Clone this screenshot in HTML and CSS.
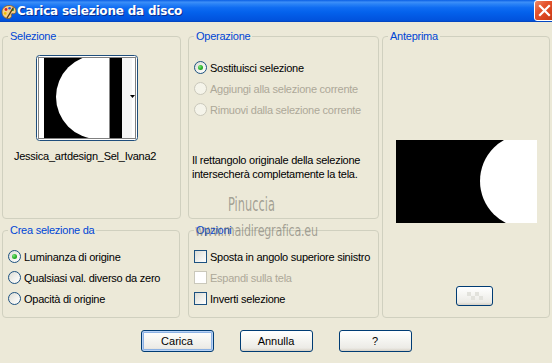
FILE: index.html
```html
<!DOCTYPE html>
<html lang="it">
<head>
<meta charset="utf-8">
<title>Carica selezione da disco</title>
<link rel="stylesheet" href="styles.css">
</head>
<body>
<div class="window">
  <div class="titlebar">
    <svg class="app-icon" width="16" height="16" viewBox="0 0 16 16">
      <path d="M8 1.5c4 0 7 2.4 7 5.6 0 2.2-1.6 3-3 2.6-1.2-.3-2 .3-1.6 1.6.4 1.4-.5 3.2-3 3.2C3.6 14.5 1 11.6 1 8 1 4.4 4 1.5 8 1.5z" fill="#F2D08A" stroke="#8A5A20" stroke-width="0.8"/>
      <circle cx="5" cy="5.5" r="1.4" fill="#E02020"/>
      <circle cx="8.6" cy="4.2" r="1.3" fill="#2050E0"/>
      <circle cx="11.8" cy="5.8" r="1.2" fill="#20A040"/>
      <circle cx="4.2" cy="9.4" r="1.3" fill="#F0C000"/>
      <path d="M6 14 L12.5 3.5" stroke="#5A3A10" stroke-width="1.4"/>
    </svg>
    <span class="title">Carica selezione da disco</span>
    <span class="close">
      <svg width="13" height="13" viewBox="0 0 13 13"><path d="M2 2 L11 11 M11 2 L2 11" stroke="#fff" stroke-width="2.2" stroke-linecap="square"/></svg>
    </span>
  </div>

  <div class="content">
    <fieldset class="group g-sel">
      <legend>Selezione</legend>
      <div class="sel-body">
        <svg class="thumb" width="102" height="86" viewBox="0 0 102 86">
          <defs><clipPath id="imgclip"><rect x="8" y="3" width="88" height="80"/></clipPath></defs>
          <rect x="0.5" y="0.5" width="101" height="85" rx="3" fill="#fff" stroke="#1F4E7C"/>
          <g clip-path="url(#imgclip)">
            <rect x="8" y="3" width="88" height="80" fill="#000"/>
            <circle cx="62" cy="42" r="42" fill="#fff"/>
            <rect x="62" y="3" width="11" height="80" fill="#fff"/>
            <rect x="73" y="3" width="1" height="80" fill="#888"/>
            <rect x="74" y="3" width="12" height="80" fill="#000"/>
            <rect x="86" y="3" width="10" height="80" fill="#F6F6F6"/>
          </g>
          <rect x="2.5" y="2.5" width="97" height="81" fill="none" stroke="#000" stroke-dasharray="1 1"/>
          <path d="M94 40 H99 L96.5 43 Z" fill="#000"/>
        </svg>
        <div class="sel-name">Jessica_artdesign_Sel_Ivana2</div>
      </div>
    </fieldset>

    <fieldset class="group g-op">
      <legend>Operazione</legend>
      <div class="op-body">
        <div class="row"><span class="radio checked"></span><span>Sostituisci selezione</span></div>
        <div class="row disabled"><span class="radio"></span><span>Aggiungi alla selezione corrente</span></div>
        <div class="row disabled"><span class="radio"></span><span>Rimuovi dalla selezione corrente</span></div>
        <p class="note">Il rettangolo originale della selezione intersecherà completamente la tela.</p>
      </div>
    </fieldset>

    <fieldset class="group g-prev">
      <legend>Anteprima</legend>
      <div class="prev-body">
        <svg class="preview" width="141" height="83" viewBox="0 0 141 83">
          <defs><clipPath id="pclip"><rect width="141" height="83"/></clipPath></defs>
          <g clip-path="url(#pclip)">
            <rect width="141" height="83" fill="#000"/>
            <circle cx="131" cy="41" r="47" fill="#fff"/>
            <rect x="131" y="0" width="10" height="83" fill="#fff"/>
          </g>
        </svg>
        <button class="btn small" type="button">
          <svg width="20" height="10" viewBox="0 0 20 10">
            <rect x="2" y="1" width="4" height="4" fill="#E2E2DC"/>
            <rect x="10" y="1" width="4" height="4" fill="#E2E2DC"/>
            <rect x="6" y="5" width="4" height="4" fill="#E2E2DC"/>
            <rect x="14" y="5" width="4" height="4" fill="#E2E2DC"/>
          </svg>
        </button>
      </div>
    </fieldset>

    <fieldset class="group g-crea">
      <legend>Crea selezione da</legend>
      <div class="opt-body">
        <div class="row"><span class="radio checked"></span><span>Luminanza di origine</span></div>
        <div class="row"><span class="radio"></span><span>Qualsiasi val. diverso da zero</span></div>
        <div class="row"><span class="radio"></span><span>Opacità di origine</span></div>
      </div>
    </fieldset>

    <fieldset class="group g-opz">
      <legend>Opzioni</legend>
      <div class="opt-body">
        <div class="row"><span class="check"></span><span>Sposta in angolo superiore sinistro</span></div>
        <div class="row disabled"><span class="check"></span><span>Espandi sulla tela</span></div>
        <div class="row"><span class="check"></span><span>Inverti selezione</span></div>
      </div>
    </fieldset>

    <div class="watermark wm1">Pinuccia</div>
    <div class="watermark wm2">www.maidiregrafica.eu</div>
  </div>

  <div class="buttons">
    <button class="btn default" type="button">Carica</button>
    <button class="btn" type="button">Annulla</button>
    <button class="btn" type="button">?</button>
  </div>
</div>
</body>
</html>
```

FILE: styles.css
```css
* { box-sizing: border-box; }
html, body { margin: 0; padding: 0; }
body {
  width: 552px;
  height: 363px;
  overflow: hidden;
  background: #ECE9D8;
  font-family: "Liberation Sans", Arial, sans-serif;
  font-size: 11px;
  letter-spacing: -0.25px;
  color: #000;
}
.window {
  width: 552px;
  height: 363px;
  overflow: hidden;
  background: #ECE9D8;
}
.titlebar {
  height: 22px;
  display: flex;
  align-items: center;
  background: linear-gradient(#0A5FE4 0%, #3D8FF8 10%, #2A83F6 18%, #0F6CF2 35%, #0462EC 55%, #0259E4 75%, #0153DD 92%, #0442B8 100%);
  color: #fff;
}
.app-icon { margin-left: 1px; margin-top: 1px; flex: none; }
.title {
  font-family: "DejaVu Sans", sans-serif;
  font-weight: bold;
  font-size: 12px;
  letter-spacing: -0.2px;
  text-shadow: 1px 1px 0 #0A2E90;
  flex: 1;
}
.close {
  width: 21px;
  height: 21px;
  margin-right: -3px;
  margin-top: -1px;
  border: 1px solid #fff;
  border-radius: 3px;
  background: linear-gradient(135deg, #F08A6A 0%, #E5552F 35%, #D8421C 70%, #C23A18 100%);
  display: flex;
  align-items: center;
  justify-content: center;
}

.content {
  position: relative;
  display: grid;
  grid-template-columns: 186px 194px 168px;
  grid-template-rows: 189px 94px;
  row-gap: 5px;
  padding: 8px 0 0 2px;
}
.group {
  margin: 0;
  padding: 0;
  min-width: 0;
  border: 1px solid #D0D0BF;
  border-radius: 4px;
}
.group legend {
  margin-left: 5px;
  padding: 0 2px;
  color: #0046D5;
  line-height: 12px;
  font-size: 11px;
}
.g-sel { grid-column: 1; grid-row: 1; width: 179px; }
.g-op { grid-column: 2; grid-row: 1; width: 191px; }
.g-prev { grid-column: 3; grid-row: 1 / 3; width: 168px; }
.g-crea { grid-column: 1; grid-row: 2; width: 178px; }
.g-opz { grid-column: 2; grid-row: 2; width: 191px; }

.sel-body {
  display: flex;
  flex-direction: column;
  padding: 13px 0 0 33px;
}
.sel-name {
  margin: 9px 0 0 -22px;
  line-height: 13px;
  white-space: nowrap;
}

.op-body { padding: 15px 0 0 5px; }
.opt-body { padding: 10px 0 0 5px; }
.row {
  display: flex;
  align-items: center;
  height: 21px;
  gap: 3px;
  white-space: nowrap;
}
.row.disabled { color: #ACA899; }
.radio {
  flex: none;
  width: 13px;
  height: 13px;
  border-radius: 50%;
  border: 1px solid #1C5180;
  background: linear-gradient(135deg, #DCDCD5 0%, #F2F2EE 55%, #FFFFFF 100%);
  display: flex;
  align-items: center;
  justify-content: center;
}
.radio.checked::after {
  content: "";
  width: 5px;
  height: 5px;
  border-radius: 50%;
  background: radial-gradient(circle at 35% 35%, #7EE27E 0%, #2BB52B 50%, #168A16 100%);
}
.row.disabled .radio { border-color: #CAC8BB; background: #F5F4EA; }
.check {
  flex: none;
  width: 13px;
  height: 13px;
  border: 1px solid #1C5180;
  background: linear-gradient(135deg, #DCDCD5 0%, #F0F0EC 55%, #FFFFFF 100%);
}
.row.disabled .check { border-color: #CAC8BB; background: #fff; }
.note {
  margin: 33px 0 0 -2px;
  line-height: 14px;
}

.prev-body {
  display: flex;
  flex-direction: column;
  align-items: center;
  padding-top: 98px;
}
.preview { display: block; }
.btn {
  font-family: "Liberation Sans", Arial, sans-serif;
  font-size: 11px;
  color: #000;
  width: 73px;
  height: 22px;
  padding: 0;
  border: 1px solid #003C74;
  border-radius: 3px;
  background: linear-gradient(#FFFFFF 0%, #F6F6F3 40%, #ECEBE6 85%, #D6D0C5 100%);
}
.btn.default {
  box-shadow: inset 0 0 0 1px #B8D2F6, inset 0 0 0 2px #8DB2E3;
}
.btn.small {
  width: 37px;
  height: 20px;
  margin: 63px 0 0 17px;
  display: flex;
  align-items: center;
  justify-content: center;
}

.buttons {
  display: flex;
  justify-content: center;
  gap: 26px;
  margin-top: 12px;
}

.watermark {
  position: absolute;
  color: rgba(100, 98, 90, 0.55);
  font-family: "DejaVu Sans", sans-serif;
  white-space: nowrap;
  pointer-events: none;
  transform-origin: 0 0;
}
.wm1 { left: 228px; top: 171px; font-size: 19px; letter-spacing: 0; transform: scaleX(0.6); }
.wm2 { left: 195px; top: 200px; font-size: 15px; letter-spacing: -0.3px; transform: scaleX(0.74); }
```
